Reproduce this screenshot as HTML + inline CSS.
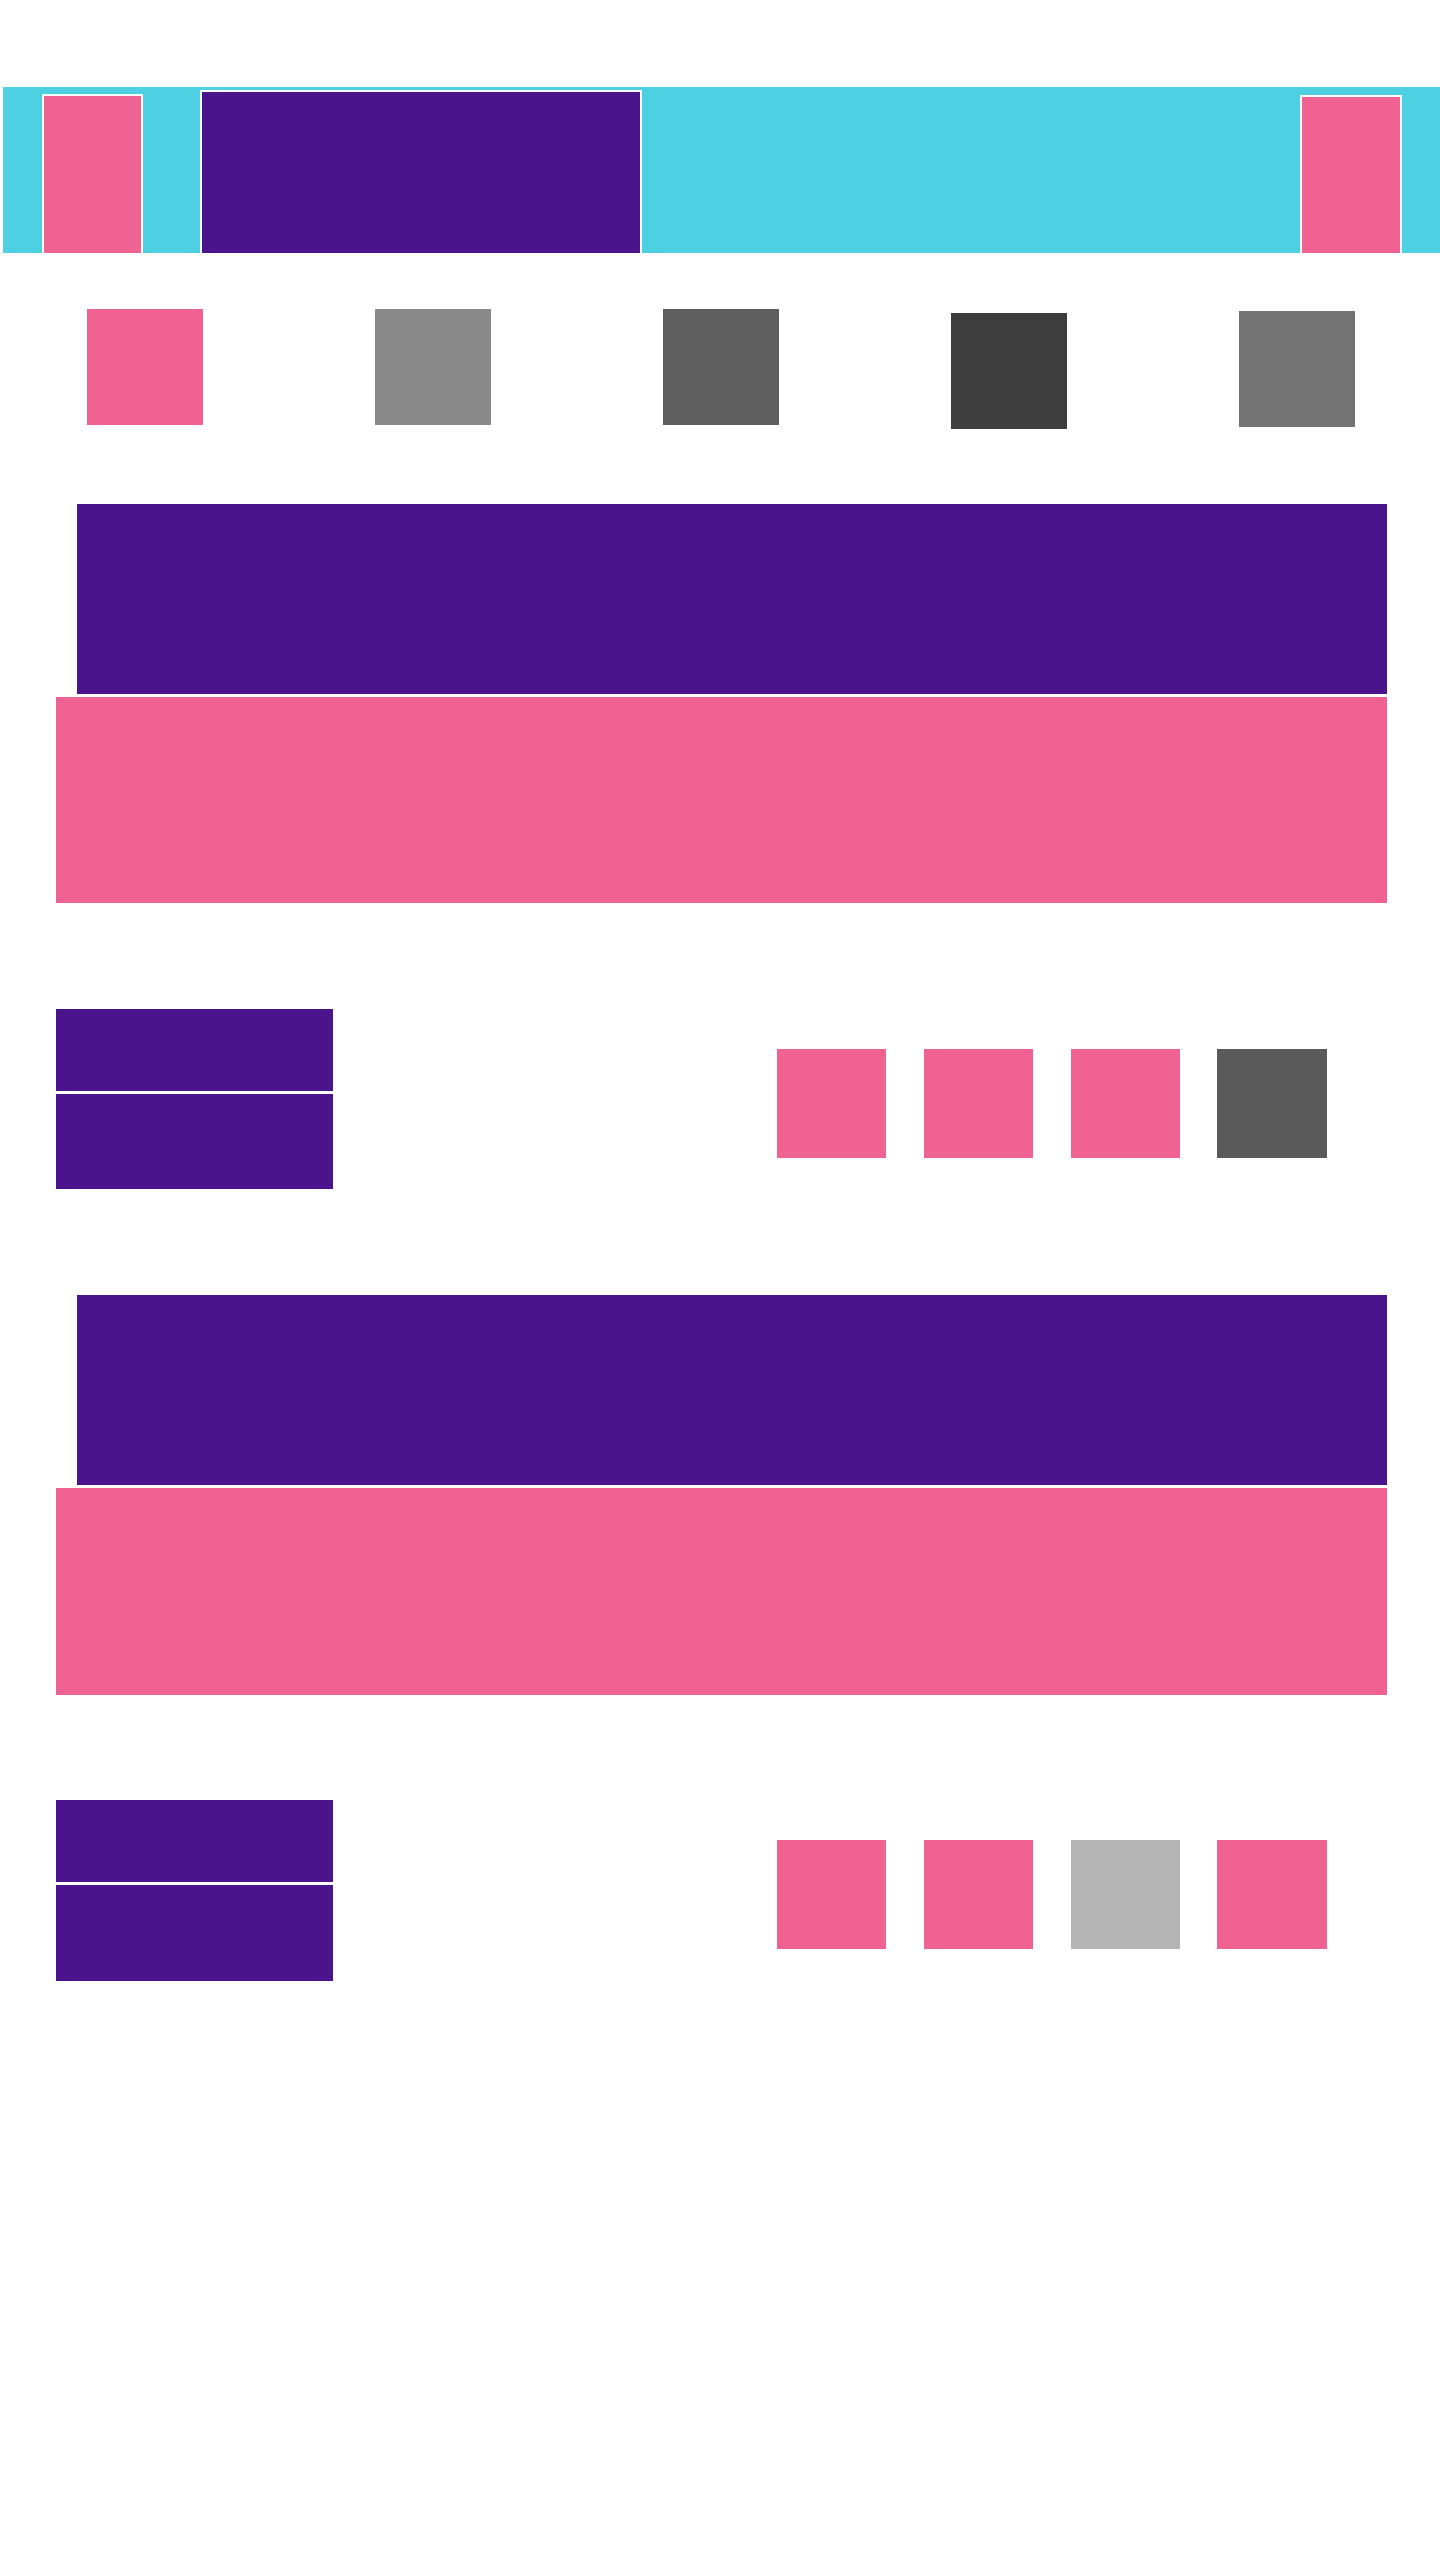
<!DOCTYPE html>
<html><head><style>
html,body{margin:0;padding:0;background:#fff;width:1440px;height:2560px;position:relative;overflow:hidden}
div{position:absolute;box-sizing:border-box}
.p{background:#f06292}.v{background:#4a148c}
</style></head><body>
<div style="left:3px;top:87px;width:1437px;height:166px;background:#4dd0e1"></div>
<div class="p" style="left:42px;top:94px;width:101px;height:159px;border:2px solid #fff;border-bottom:0"></div>
<div class="v" style="left:200px;top:90px;width:442px;height:163px;border:2px solid #fff;border-bottom:0"></div>
<div class="p" style="left:1300px;top:95px;width:102px;height:158px;border:2px solid #fff;border-bottom:0"></div>

<div class="p" style="left:87px;top:309px;width:116px;height:116px"></div>
<div style="left:375px;top:309px;width:116px;height:116px;background:#898989"></div>
<div style="left:663px;top:309px;width:116px;height:116px;background:#5e5e5e"></div>
<div style="left:951px;top:313px;width:116px;height:116px;background:#3d3d3d"></div>
<div style="left:1239px;top:311px;width:116px;height:116px;background:#737373"></div>

<div class="v" style="left:77px;top:504px;width:1310px;height:190px"></div>
<div class="p" style="left:56px;top:697px;width:1331px;height:206px"></div>
<div class="v" style="left:56px;top:1009px;width:277px;height:82px"></div>
<div class="v" style="left:56px;top:1094px;width:277px;height:95px"></div>
<div class="p" style="left:777px;top:1049px;width:109px;height:109px"></div>
<div class="p" style="left:924px;top:1049px;width:109px;height:109px"></div>
<div class="p" style="left:1071px;top:1049px;width:109px;height:109px"></div>
<div style="left:1217px;top:1049px;width:110px;height:109px;background:#5a5a5a"></div>

<div class="v" style="left:77px;top:1295px;width:1310px;height:190px"></div>
<div class="p" style="left:56px;top:1488px;width:1331px;height:207px"></div>
<div class="v" style="left:56px;top:1800px;width:277px;height:82px"></div>
<div class="v" style="left:56px;top:1885px;width:277px;height:96px"></div>
<div class="p" style="left:777px;top:1840px;width:109px;height:109px"></div>
<div class="p" style="left:924px;top:1840px;width:109px;height:109px"></div>
<div style="left:1071px;top:1840px;width:109px;height:109px;background:#b4b4b4"></div>
<div class="p" style="left:1217px;top:1840px;width:110px;height:109px"></div>
</body></html>
